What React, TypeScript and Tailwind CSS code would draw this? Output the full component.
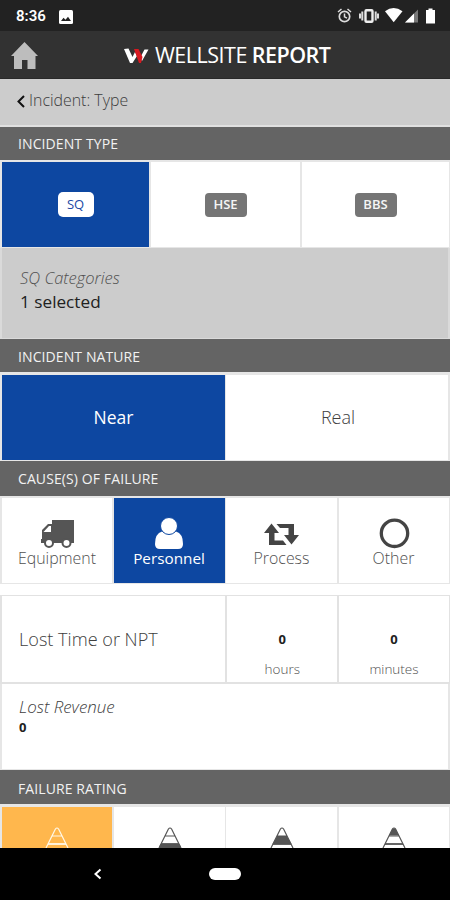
import type { ReactNode } from "react";

function Section({ title, className }: { title: string; className: string }) {
  return (
    <h2 className={`flex shrink-0 items-center bg-[#646464] pl-[18px] text-[14px] font-normal tracking-[0.1px] text-[#f2f2f2] ${className}`}>
      <span>{title}</span>
    </h2>
  );
}

function Cause({ label, active, icon }: { label: string; active?: boolean; icon: ReactNode }) {
  return (
    <button
      className={`flex flex-col items-center pt-[16px] leading-[20px] ${
        active ? "bg-[#0d47a1] text-[15.3px] text-white" : "bg-white text-[15.9px] font-light text-[#505050]"
      }`}
    >
      {icon}
      <span className="mt-[-2px]">{label}</span>
    </button>
  );
}

function Cone({ color, fills }: { color: string; fills: boolean[] }) {
  const bands = ["M10.5 1.5h3l3.5 7h-10z", "M7 9h10l4.5 8h-19z", "M2.5 17h19l3 7h-25z"];
  return (
    <svg width="24" height="22" viewBox="0 -1 24 22" fill="none">
      {bands.map((d, i) => (
        <path key={d} d={d} fill={fills[i] ? color : "none"} />
      ))}
      <path d="M1 21 10.4 2q1.600-2 3.200 0L23 21M7 9h10" stroke={color} strokeWidth="1.200" />
      <path d="M3 17h18" stroke={color} strokeWidth="1.800" />
    </svg>
  );
}

export default function App() {
  return (
    <div className="flex h-[900px] w-[450px] flex-col overflow-hidden bg-white font-['Open_Sans','Noto_Sans',sans-serif]">
      <div className="flex h-[31px] shrink-0 items-center bg-[#222] pl-[16px] pr-[14px] text-white">
        <span className="mt-[2px] w-[43px] font-[Roboto,sans-serif] text-[15px] font-semibold">8:36</span>
        <svg className="mt-[2px]" width="14" height="14" viewBox="0 0 14 14">
          <rect width="14" height="14" rx="1.5" fill="#fff" />
          <path d="m2 11 2.5-3.3 2 2 2.5-3 3 4.3z" fill="#222" />
        </svg>
        <svg className="ml-auto mt-[1px]" width="99" height="18" viewBox="337 7 99 18" fill="none">
          <circle cx="344.5" cy="16.5" r="5.2" stroke="#ddd" strokeWidth="1.7" />
          <path d="m338 12 3.500-3M351 12l-3.500-3M344.500 13.500v3.300l2.500 1.400" stroke="#ddd" strokeWidth="1.5" />
          <path d="M360 13.500v5M362.300 11.500v9M378 13.500v5M375.700 11.500v9" stroke="#ddd" strokeWidth="2" />
          <rect x="365.500" y="10.200" width="7" height="11.500" rx="1" stroke="#eee" strokeWidth="2.400" />
          <path d="M385 11.300q8.500-6.500 17.500 0l-8.800 11z" fill="#fff" />
          <path d="m405 22.500 13-13v13z" fill="#777" />
          <path d="m405 22.500 9-9v9z" fill="#fff" />
          <path d="M426 10h2.500V8.500h4V10h2.500v13.500h-9z" fill="#fff" />
        </svg>
      </div>

      <header className="flex h-[48px] shrink-0 items-center border-b border-[#292929] bg-[#323232] pl-[11px] text-white">
        <svg className="mt-[2px]" width="27" height="28" viewBox="0 0 27 28">
          <path d="M13.500 0 27 14h-2.500v13h-8v-9h-5.500v9H3V14H0z" fill="#bdbdbd" />
        </svg>
        <svg className="ml-[86px] mt-[2px]" width="25" height="16" viewBox="0 0 25 16">
          <path d="m0 1 4.500-.5 4 8.500L11 4l2 4-4.500 7H6zM16 10 20.500 1.500h4L18 13z" fill="#fff" />
          <path d="M10 1h4.500l4 8-1.500 6h-2z" fill="#d71920" />
        </svg>
        <h1 className="ml-[6px] mt-[2px] flex gap-[5px] whitespace-nowrap text-[21.500px] font-normal">
          <span className="tracking-[-0.5px]">WELLSITE</span>
          <strong className="font-semibold tracking-[-0.55px]">REPORT</strong>
        </h1>
      </header>

      <nav className="flex h-[48px] shrink-0 items-center border-b-2 border-[#e0e0e0] bg-[#ccc] pl-[17px] text-[15.900px] font-light text-[#3c3c3c]">
        <svg className="mt-[-2px]" width="8" height="13" viewBox="0 0 8 13" fill="none">
          <path d="M7 1 1.500 6.500 7 12" stroke="#111" strokeWidth="2" />
        </svg>
        <span className="ml-[4px] mt-[-2px]">Incident: Type</span>
      </nav>

      <Section title="INCIDENT TYPE" className="h-[33px]" />
      <div className="grid h-[88px] shrink-0 grid-cols-[147px_149px_147px] gap-[2px] border-2 border-b-1 border-[#e6e6e6] bg-[#e6e6e6] text-[13px] leading-none">
        <button className="flex items-center justify-center bg-[#0d47a1]">
          <span className="flex h-[25px] w-[36px] items-center justify-center rounded-[5px] bg-white text-[#2148a5]">SQ</span>
        </button>
        <button className="flex items-center justify-center bg-white">
          <span className="flex h-[24px] w-[42px] items-center justify-center rounded-[4px] bg-[#757575] font-semibold text-[#f5f5f5]">HSE</span>
        </button>
        <button className="flex items-center justify-center bg-white">
          <span className="flex h-[24px] w-[42px] items-center justify-center rounded-[4px] bg-[#757575] font-semibold text-[#f5f5f5]">BBS</span>
        </button>
      </div>
      <div className="flex h-[91px] shrink-0 flex-col border-x-2 border-b border-[#dadada] bg-[#ccc] pl-[18px] pt-[18px]">
        <span className="text-[16.500px] font-light italic leading-[24px] text-[#505050]">SQ Categories</span>
        <span className="text-[17.200px] leading-[24px] text-[#212121]">1 selected</span>
      </div>

      <Section title="INCIDENT NATURE" className="h-[33px] pt-[1px]" />
      <div className="grid h-[89px] shrink-0 grid-cols-[223px_222px] gap-[1px] border-2 border-t-3 border-b-1 border-[#e6e6e6] bg-[#e6e6e6] text-[17.500px]">
        <button className="bg-[#0d47a1] text-white">Near</button>
        <button className="bg-white pl-[2px] text-[18px] font-light text-[#404040]">Real</button>
      </div>

      <Section title="CAUSE(S) OF FAILURE" className="h-[35px]" />
      <div className="grid h-[88px] shrink-0 grid-cols-[110px_111px_111px_110px] gap-x-[1.5px] border-2 border-b-1 border-[#e6e6e6] bg-[#e6e6e6]">
        <Cause
          label="Equipment"
          icon={
            <svg width="34" height="36" viewBox="0 0 34 36">
              <path d="M12 6h22v23H1v-4h1V16l6-6h4z" fill="#555" />
              <path d="M3.500 18 9 12h2v6z" fill="#fff" />
              <circle cx="9" cy="29" r="4" fill="#fff" stroke="#555" strokeWidth="2" />
              <circle cx="26.500" cy="29" r="4" fill="#fff" stroke="#555" strokeWidth="2" />
            </svg>
          }
        />
        <Cause
          label="Personnel"
          active
          icon={
            <svg width="30" height="36" viewBox="0 0 30 36" fill="#fff">
              <path d="M8 17.500h14q7 2 7 12.500 0 5-5 5H6q-5 0-5-5Q1 19.500 8 17.500z" />
              <circle cx="15" cy="12" r="8.500" fill="#fff" stroke="#0d47a1" strokeWidth="1" />
            </svg>
          }
        />
        <Cause
          label="Process"
          icon={
            <svg width="35" height="36" viewBox="0 0 35 36" fill="#444">
              <path d="m0 19 7.500-9.500L15 19h-4.500v7.500H19l3.500 4.500H5V19z" />
              <path d="m35 21-7.500 9.500L20 21h4.500v-7H16l-3.500-4H30v11z" />
            </svg>
          }
        />
        <Cause
          label="Other"
          icon={
            <svg width="32" height="36" viewBox="0 0 32 36" fill="none">
              <circle cx="16.500" cy="19.300" r="13.200" stroke="#444" strokeWidth="3.300" />
            </svg>
          }
        />
      </div>

      <div className="mt-[11px] grid h-[89px] shrink-0 grid-cols-[223px_110.500px_110px] gap-x-[1.500px] border-2 border-t-1 border-[#e2e2e2] bg-[#e2e2e2]">
        <div className="flex items-center bg-white pl-[17px] pt-[1px] text-[18.100px] font-light text-[#404040]">Lost Time or NPT</div>
        {["hours", "minutes"].map((unit) => (
          <div key={unit} className="flex flex-col items-center bg-white pl-[1px] pt-[33px]">
            <span className="text-[13px] font-bold leading-[20px] text-[#212121]">0</span>
            <span className="mt-[11px] text-[13.500px] font-light leading-[18px] text-[#505050]">{unit}</span>
          </div>
        ))}
      </div>
      <div className="flex h-[86px] shrink-0 flex-col border-x-2 border-b border-[#e6e6e6] bg-white pl-[17px] pt-[13px]">
        <span className="text-[16.900px] font-light italic leading-[20px] text-[#404040]">Lost Revenue</span>
        <span className="text-[13px] font-bold leading-[20px] text-[#212121]">0</span>
      </div>

      <Section title="FAILURE RATING" className="h-[34px] pt-[2px]" />
      <div className="grid h-[44px] shrink-0 grid-cols-[110px_111px_111px_110px] gap-x-[1.500px] border-2 border-b-0 border-t-3 border-[#e6e6e6] bg-[#e6e6e6]">
        {[
          { color: "#fff8e8", fills: [false, false, false] },
          { color: "#555", fills: [false, false, true] },
          { color: "#555", fills: [false, true, false] },
          { color: "#555", fills: [true, false, false] },
        ].map((cone, i) => (
          <button key={i} className={`flex items-end justify-center ${i === 0 ? "bg-[#ffb74d]" : "bg-white pl-[1px]"}`}>
            <Cone color={cone.color} fills={cone.fills} />
          </button>
        ))}
      </div>

      <footer className="flex h-[52px] shrink-0 items-center bg-black pl-[94px]">
        <svg width="8" height="12" viewBox="0 0 8 12" fill="none">
          <path d="M6.500 1.500 1.500 6l5 4.500" stroke="#fff" strokeWidth="2" />
        </svg>
        <div className="ml-[107px] h-[12px] w-[32px] rounded-full bg-white" />
      </footer>
    </div>
  );
}
